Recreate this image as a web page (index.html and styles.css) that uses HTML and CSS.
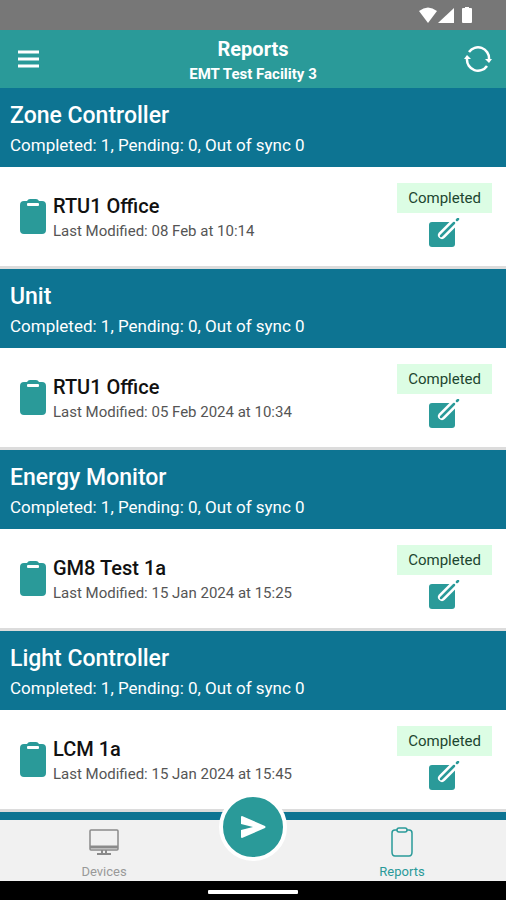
FILE: index.html
```html
<!DOCTYPE html>
<html lang="en">
<head>
    <meta charset="UTF-8">
    <meta name="viewport" content="width=device-width, initial-scale=1.0">
    <title>Reports</title>
    <link rel="stylesheet" href="styles.css">
</head>
<body>

<svg class="symbols" aria-hidden="true">
    <symbol id="clipboard" viewBox="0 0 26 36">
        <path fill="#2a9a99" d="M4 2h3q1-2 3-2h6q2 0 3 2h3q4 0 4 4v25q0 4-4 4H4q-4 0-4-4V6q0-4 4-4z"/>
        <rect x="7" y="4" width="12" height="3" rx="1" fill="#fff"/>
    </symbol>
    <symbol id="edit" viewBox="0 0 32 32">
        <rect x="0" y="4" width="26" height="25" rx="3" fill="#2a9a99"/>
        <path d="M13 17L26 4" stroke="#fff" stroke-width="8" stroke-linecap="round"/>
        <path d="M12 18L25 5" stroke="#2a9a99" stroke-width="2.5" stroke-linecap="round"/>
        <path d="M28 2l1-1" stroke="#2a9a99" stroke-width="2.5" stroke-linecap="round"/>
    </symbol>
</svg>

<div class="app">
    <div class="status-bar">
        <svg width="54" height="18" viewBox="0 0 54 18" fill="#fff">
            <path d="M0 4Q9-3 18 4L9 16z"/>
            <path d="M35 1v15H19z"/>
            <path d="M46 0h4v1h2q1 0 1 1v13q0 1-1 1h-8q-1 0-1-1V2q0-1 1-1h2z"/>
        </svg>
    </div>

    <header class="app-bar">
        <button class="icon-button" aria-label="Menu">
            <svg width="21" height="18" viewBox="0 0 21 18">
                <path d="M0 2h21M0 9h21M0 16h21" stroke="#fff" stroke-width="3"/>
            </svg>
        </button>
        <div class="titles">
            <h1>Reports</h1>
            <p>EMT Test Facility 3</p>
        </div>
        <button class="icon-button" aria-label="Refresh">
            <svg width="28" height="26" viewBox="0 0 28 26" fill="none" stroke="#fff" stroke-width="2.5">
                <path d="M5 6A11 11 0 0 1 25 13"/>
                <path d="M23 20A11 11 0 0 1 3 13"/>
                <path d="M21 13h7l-3 4zM0 13h7l-4-4z" fill="#fff" stroke="none"/>
            </svg>
        </button>
    </header>

    <main class="list">
        <section>
            <div class="section-head">
                <h2>Zone Controller</h2>
                <p>Completed: 1, Pending: 0, Out of sync 0</p>
            </div>
            <div class="report">
                <svg class="clipboard"><use href="#clipboard"/></svg>
                <div class="report-text">
                    <h3>RTU1 Office</h3>
                    <p>Last Modified: 08 Feb at 10:14</p>
                </div>
                <div class="report-state">
                    <span class="badge">Completed</span>
                    <button class="edit" aria-label="Edit"><svg><use href="#edit"/></svg></button>
                </div>
            </div>
        </section>

        <section>
            <div class="section-head">
                <h2>Unit</h2>
                <p>Completed: 1, Pending: 0, Out of sync 0</p>
            </div>
            <div class="report">
                <svg class="clipboard"><use href="#clipboard"/></svg>
                <div class="report-text">
                    <h3>RTU1 Office</h3>
                    <p>Last Modified: 05 Feb 2024 at 10:34</p>
                </div>
                <div class="report-state">
                    <span class="badge">Completed</span>
                    <button class="edit" aria-label="Edit"><svg><use href="#edit"/></svg></button>
                </div>
            </div>
        </section>

        <section>
            <div class="section-head">
                <h2>Energy Monitor</h2>
                <p>Completed: 1, Pending: 0, Out of sync 0</p>
            </div>
            <div class="report">
                <svg class="clipboard"><use href="#clipboard"/></svg>
                <div class="report-text">
                    <h3>GM8 Test 1a</h3>
                    <p>Last Modified: 15 Jan 2024 at 15:25</p>
                </div>
                <div class="report-state">
                    <span class="badge">Completed</span>
                    <button class="edit" aria-label="Edit"><svg><use href="#edit"/></svg></button>
                </div>
            </div>
        </section>

        <section>
            <div class="section-head">
                <h2>Light Controller</h2>
                <p>Completed: 1, Pending: 0, Out of sync 0</p>
            </div>
            <div class="report">
                <svg class="clipboard"><use href="#clipboard"/></svg>
                <div class="report-text">
                    <h3>LCM 1a</h3>
                    <p>Last Modified: 15 Jan 2024 at 15:45</p>
                </div>
                <div class="report-state">
                    <span class="badge">Completed</span>
                    <button class="edit" aria-label="Edit"><svg><use href="#edit"/></svg></button>
                </div>
            </div>
        </section>

        <div class="section-head"></div>
    </main>

    <nav class="tabs">
        <a href="#devices">
            <svg width="30" height="32" viewBox="0 0 30 32" fill="none" stroke="#8a8a8a">
                <rect x="1" y="5" width="28" height="20" rx="1" stroke-width="1.5"/>
                <path d="M1 22h28" stroke-width="3"/>
                <path d="M13 25v4M17 25v4" stroke-width="2"/>
                <path d="M8 29h14" stroke-width="2"/>
            </svg>
            Devices
        </a>
        <button class="send" aria-label="Send">
            <svg width="26" height="22" viewBox="0 0 26 22" fill="#fff">
                <path d="M1 1Q1 0 2 0l23 10q1 1 0 2L2 22q-1 0-1-1v-7l12-3L1 8z"/>
            </svg>
        </button>
        <a href="#reports" class="active">
            <svg width="24" height="32" viewBox="0 0 24 32" fill="none" stroke="#2a9a99" stroke-width="1.5">
                <path d="M7 5H5Q2 5 2 8v19q0 4 3 4h14q3 0 3-4V8q0-3-3-3h-2"/>
                <rect x="7" y="3" width="10" height="4" rx="2"/>
            </svg>
            Reports
        </a>
    </nav>

    <div class="home-bar"><span></span></div>
</div>

</body>
</html>
```
FILE: styles.css
```css
* {
    box-sizing: border-box;
}
body {
    font-family: Roboto, "Liberation Sans", sans-serif;
    margin: 0;
    background-color: #fff;
}
h1, h2, h3, p {
    margin: 0;
}
button {
    padding: 0;
    border: none;
    background: none;
    font-family: inherit;
    cursor: pointer;
}
svg {
    display: block;
    flex-shrink: 0;
}
.symbols {
    position: absolute;
    width: 0;
    height: 0;
}
.app {
    display: flex;
    flex-direction: column;
    height: 100vh;
}
.status-bar {
    display: flex;
    justify-content: flex-end;
    padding: 7px 33px 5px;
    background-color: #777;
}
.app-bar {
    display: flex;
    align-items: center;
    justify-content: space-between;
    padding: 0 12px;
    background-color: #2a9a99;
    color: #fff;
}
.icon-button {
    display: flex;
    justify-content: center;
    width: 32px;
}
.titles {
    padding: 6px 0 2px;
    text-align: center;
}
.titles h1 {
    font-size: 20px;
    font-weight: 700;
    line-height: 26px;
}
.titles p {
    font-size: 15px;
    font-weight: 700;
    line-height: 24px;
}
.list {
    flex: 1;
    min-height: 0;
    overflow: hidden;
}
.section-head {
    min-height: 79px;
    padding: 12px 10px 8px;
    background-color: #0d7492;
    color: #fff;
}
.section-head h2 {
    font-size: 23px;
    font-weight: 500;
    line-height: 32px;
}
.section-head p {
    font-size: 17px;
    line-height: 26px;
}
.report {
    display: flex;
    align-items: center;
    padding: 16px 14px 15px 20px;
    border-bottom: 3px solid #dcdcdc;
}
.clipboard {
    width: 26px;
    height: 36px;
    margin-right: 7px;
}
.report-text {
    flex: 1;
    padding-top: 2px;
}
.report-text h3 {
    font-size: 20px;
    font-weight: 500;
    line-height: 26px;
    color: #111;
}
.report-text p {
    font-size: 15px;
    line-height: 24px;
    color: #555;
}
.report-state {
    display: flex;
    flex-direction: column;
    align-items: center;
    gap: 5px;
}
.badge {
    padding: 0 11px;
    background-color: #dcfde4;
    font-size: 15px;
    line-height: 30px;
    color: #1c4630;
}
.edit {
    padding-bottom: 1px;
}
.edit svg {
    width: 32px;
    height: 32px;
}
.tabs {
    display: flex;
    justify-content: space-between;
    height: 61px;
    background-color: #f1f1f1;
}
.tabs a {
    display: flex;
    flex: 1;
    flex-direction: column;
    align-items: center;
    padding-top: 5px;
    font-size: 13px;
    line-height: 30px;
    color: #999;
    text-decoration: none;
}
.tabs a.active {
    color: #2a9a99;
}
.send {
    display: flex;
    align-items: center;
    justify-content: center;
    width: 68px;
    height: 68px;
    margin: -27px 11px 0;
    border: 4px solid #fff;
    border-radius: 50%;
    background-color: #2a9a99;
}
.home-bar {
    display: flex;
    justify-content: center;
    padding: 9px 0 6px;
    background-color: #000;
}
.home-bar span {
    width: 90px;
    height: 4px;
    border-radius: 1px;
    background-color: #fff;
}
```
